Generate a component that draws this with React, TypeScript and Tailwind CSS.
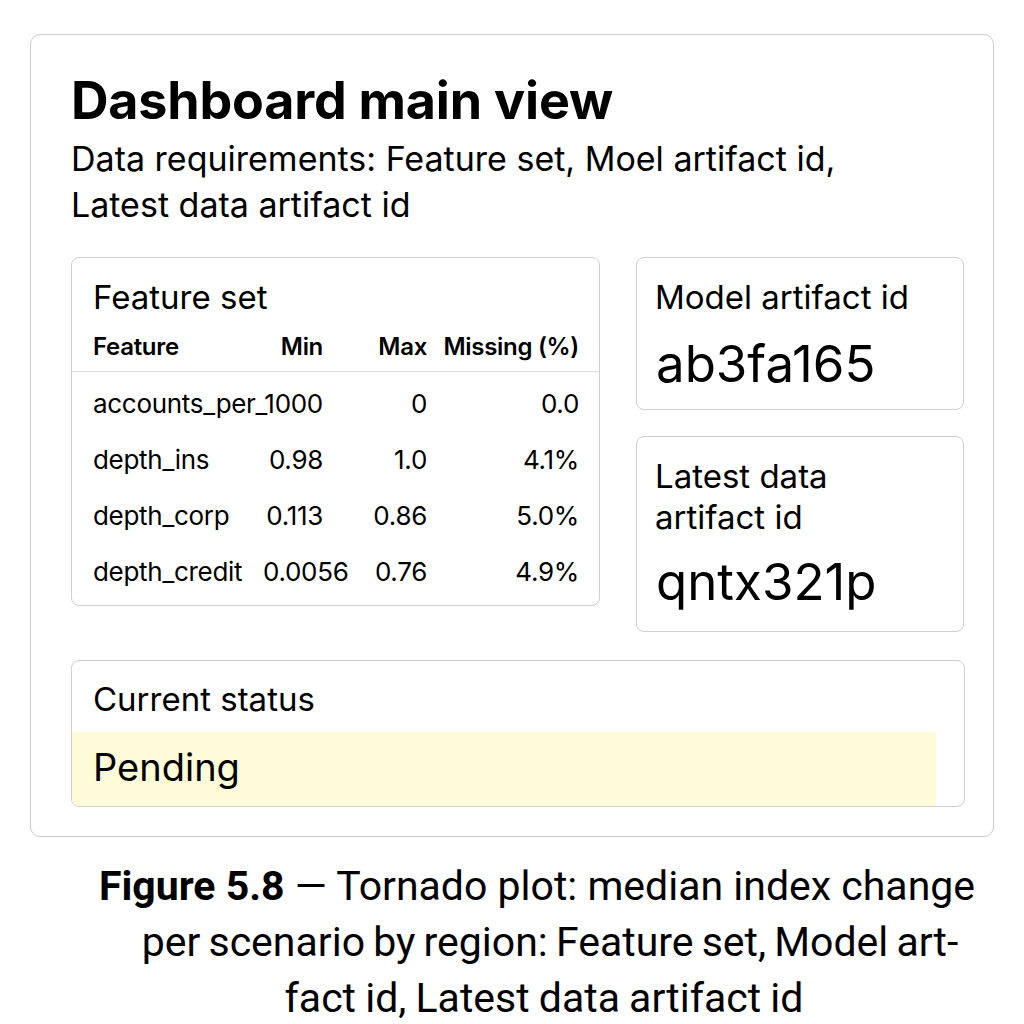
const rows = [
  { name: "accounts_per_1000", min: "", max: "0", missing: "0.0" },
  { name: "depth_ins", min: "0.98", max: "1.0", missing: "4.1%" },
  { name: "depth_corp", min: "0.113", max: "0.86", missing: "5.0%" },
  { name: "depth_credit", min: "0.0056", max: "0.76", missing: "4.9%" },
];

function FeatureSet() {
  return (
    <div className="rounded-[8px] border border-[#cfcfcf] pt-[19px] pb-[5px]">
      <div className="pl-[21px] text-[33px] leading-[41px]">Feature set</div>
      <div className="mt-[11px] grid grid-cols-[170px_60px_104px_152px] pl-[21px] pb-[6px] text-[24px] font-semibold leading-[36px] tracking-[-0.3px] border-b border-[#dddddd]">
        <div>Feature</div>
        <div className="text-right">Min</div>
        <div className="text-right">Max</div>
        <div className="text-right">Missing (%)</div>
      </div>
      <div className="pt-[4px]">
        {rows.map((r) => (
          <div
            key={r.name}
            className="grid grid-cols-[170px_60px_104px_152px] pl-[21px] text-[26px] leading-[56px] tracking-[-0.3px]"
          >
            <div className="whitespace-nowrap">{r.name}</div>
            <div className="text-right whitespace-nowrap">{r.min}</div>
            <div className="text-right">{r.max}</div>
            <div className="text-right">{r.missing}</div>
          </div>
        ))}
      </div>
    </div>
  );
}

function IdCard({ label, value, className }: { label: string; value: string; className: string }) {
  return (
    <div className={"rounded-[8px] border border-[#cfcfcf] pl-[18px] pr-[40px] " + className}>
      <div className="text-[33px] leading-[41px]">{label}</div>
      <div className="text-[51px] leading-[56px] pl-[1px] whitespace-nowrap">{value}</div>
    </div>
  );
}

export default function App() {
  return (
    <div className="w-[1024px] h-[1024px] overflow-hidden bg-white text-black font-['Inter',sans-serif]">
      <div className="pt-[34px] pl-[30px] pr-[30px]">
        <div className="rounded-[10px] border border-[#cccccc] pl-[40px] pr-[28px] pt-[37px] pb-[29px]">
          <h1 className="text-[52px] leading-[58px] font-bold tracking-[-0.2px]">Dashboard main view</h1>
          <p className="mt-[6px] text-[34px] leading-[46px]">
            Data requirements: Feature set, Moel artifact id,
            <br />
            Latest data artifact id
          </p>

          <div className="mt-[29px] grid grid-cols-[529px_328px] gap-x-[36px] items-start">
            <FeatureSet />
            <div className="flex flex-col gap-[26px]">
              <IdCard label="Model artifact id" value="ab3fa165" className="h-[153px] pt-[19px] [&>div:last-child]:mt-[18px]" />
              <IdCard label="Latest data artifact id" value="qntx321p" className="h-[196px] pt-[19px] [&>div:last-child]:mt-[16px]" />
            </div>
          </div>

          <div className="mt-[28px] rounded-[8px] border border-[#cfcfcf] overflow-hidden">
            <div className="pl-[21px] pt-[18px] pb-[12px] text-[33px] leading-[41px]">Current status</div>
            <div className="mr-[28px] h-[74px] bg-[#fefbd8] pl-[21px] pt-[12px] text-[38px] leading-[46px]">Pending</div>
          </div>
        </div>
      </div>

      <div className="ml-[72px] w-[930px] mt-[21px] text-center font-['Roboto',sans-serif] text-[41px] leading-[56px]">
        <span className="font-bold">Figure 5.8</span> — Tornado plot: median index change
        <br />
        <span className="[word-spacing:-2px] pl-[26px]">per scenario by region: Feature set, Model art-</span>
        <br />
        <span className="[word-spacing:-1px] pl-[14px]">fact id, Latest data artifact id</span>
      </div>
    </div>
  );
}
